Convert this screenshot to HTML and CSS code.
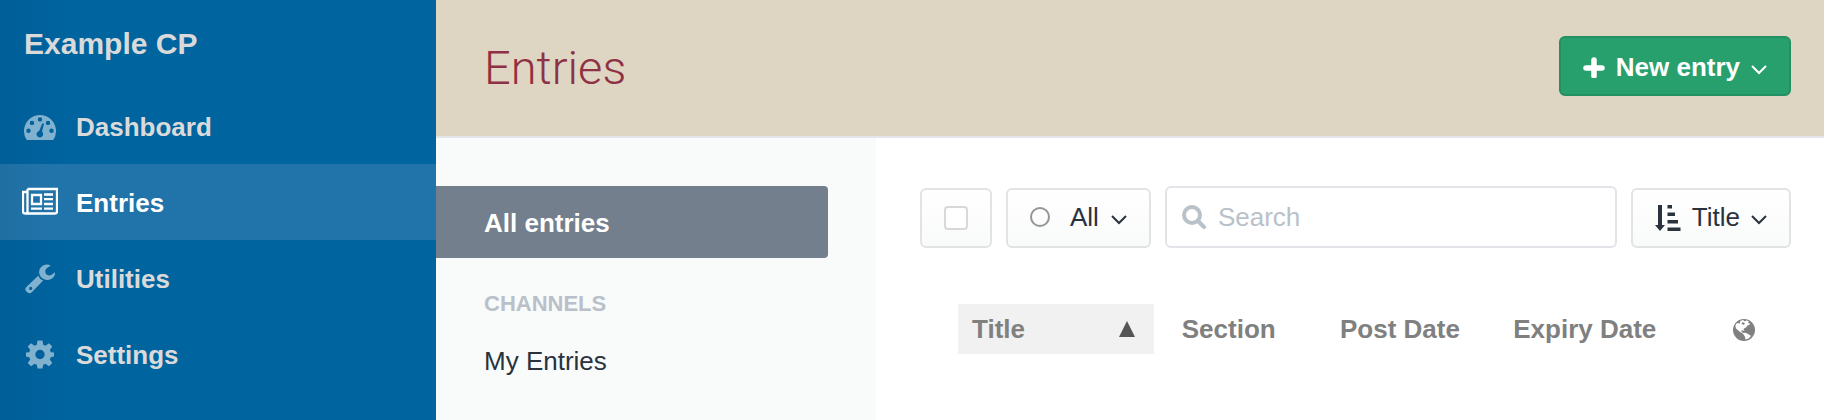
FILE: index.html
```html
<!DOCTYPE html>
<html lang="en">
<head>
<meta charset="utf-8">
<title>Entries - Example CP</title>
<link rel="stylesheet" href="styles.css">
</head>
<body>
<div class="app">
  <aside class="sidebar">
    <a class="site-name" href="#">Example CP</a>
    <nav class="nav" aria-label="Primary">
      <a class="nav-item" href="#">
        <svg class="nav-icon" viewBox="0 0 36 36" aria-hidden="true">
          <path fill="currentColor" fill-rule="evenodd" d="M4.700 32A16 16 0 1 1 31.300 32ZM6.500 20.500a2.200 2.200 0 1 0 0 4.400a2.200 2.200 0 1 0 0-4.400ZM10 12.700a2.200 2.200 0 1 0 0 4.400a2.200 2.200 0 1 0 0-4.400ZM18 9.200a2.200 2.200 0 1 0 0 4.400a2.200 2.200 0 1 0 0-4.400ZM26 12.700a2.200 2.200 0 1 0 0 4.400a2.200 2.200 0 1 0 0-4.400ZM29.500 20.500a2.200 2.200 0 1 0 0 4.400a2.200 2.200 0 1 0 0-4.400ZM20.300 15.600L17.100 22.900A3.300 3.300 0 1 0 20 23.600L21.900 16.200Q21.400 14.900 20.300 15.600Z"/>
        </svg>
        Dashboard
      </a>
      <a class="nav-item is-active" href="#" aria-current="page">
        <svg class="nav-icon" viewBox="0 0 36 36" aria-hidden="true" fill="none" stroke="currentColor" stroke-width="2.300">
          <path d="M5.500 5H35V27.500Q35 29.500 32.500 29.500H3.500Q1 29.500 1 27.500V8H5.500M5.500 5V27.500Q5.500 29.500 3.500 29.500"/>
          <path d="M10 11H19V20H10ZM22 10.500H31M22 15.200H31M22 20H31M9 24.700H20M22 24.700H31"/>
        </svg>
        Entries
      </a>
      <a class="nav-item" href="#">
        <svg class="nav-icon" viewBox="0 0 36 36" aria-hidden="true">
          <path fill="currentColor" d="M28.700 5.500C23.500 2.600 17.300 6.300 17.100 12.100C17.100 15.600 20 19.900 25.300 20C30.400 20 33.500 15.800 33 12.200L29.300 15.100C26 16.600 22.500 13.800 23.400 10.300C24 8.300 25.600 7.700 28.700 5.500Z"/>
          <path fill="currentColor" fill-rule="evenodd" d="M16.200 15.700Q17.500 19 21.200 20.500L9.800 32.200Q7.700 34.300 5.300 32.300L4.200 31.200Q2.300 28.800 4.400 26.900ZM8.700 26.800a1.600 1.600 0 1 0 0 3.200a1.600 1.600 0 1 0 0-3.200Z"/>
        </svg>
        Utilities
      </a>
      <a class="nav-item" href="#">
        <svg class="nav-icon" viewBox="0 0 36 36" aria-hidden="true">
          <path fill="currentColor" fill-rule="evenodd" d="M15.500 4.500H20.500L21.200 8.700L23.500 9.700L27 7.200L30.300 10.500L27.800 14L28.800 16.300L32 16.500V20.500L28.800 21.200L27.800 23.500L30.300 27L27 30.300L23.500 27.800L21.200 28.800L20.500 32.500H15.500L14.800 28.800L12.500 27.800L9 30.300L5.700 27L8.200 23.500L7.200 21.200L4 20.500V16.500L7.200 16.300L8.200 14L5.700 10.500L9 7.200L12.500 9.700L14.800 8.700ZM18 13.800a4.700 4.700 0 1 0 0 9.400a4.700 4.700 0 1 0 0-9.400Z"/>
        </svg>
        Settings
      </a>
    </nav>
  </aside>

  <div class="page">
    <header class="page-header">
      <h1 class="page-title">Entries</h1>
      <button class="btn btn-submit" type="button" aria-haspopup="menu">
        <svg class="plus" viewBox="0 0 22 22" aria-hidden="true"><path d="M11 4V20M3 12H19" stroke="currentColor" stroke-width="5.500" stroke-linecap="round"/></svg>
        New entry
        <svg class="chevron" viewBox="0 0 16 16" aria-hidden="true"><path d="M1 7L8 14L15 7"/></svg>
      </button>
    </header>

    <div class="page-body">
      <nav class="sources" aria-label="Sources">
        <a class="source is-selected" href="#" aria-current="true">All entries</a>
        <h2 class="sources-heading">CHANNELS</h2>
        <a class="source" href="#">My Entries</a>
      </nav>

      <main class="content">
        <div class="toolbar">
          <label class="btn btn-check"><input class="checkbox" type="checkbox" aria-label="Select all"></label>
          <button class="btn btn-status" type="button" aria-haspopup="menu">
            <span class="status-dot"></span>
            All
            <svg class="chevron" viewBox="0 0 16 16" aria-hidden="true"><path d="M1 7L8 14L15 7"/></svg>
          </button>
          <label class="search">
            <svg class="search-icon" viewBox="0 0 24 24" aria-hidden="true" fill="none" stroke="currentColor"><circle cx="10" cy="10" r="8" stroke-width="4"/><path d="M16 16L22 22" stroke-width="4" stroke-linecap="round"/></svg>
            <input class="search-input" type="text" placeholder="Search" aria-label="Search">
          </label>
          <button class="btn btn-sort" type="button" aria-haspopup="menu">
            <svg class="sort-icon" viewBox="0 0 26 28" aria-hidden="true" fill="currentColor"><path d="M3 2H7V22H10L5 28L0 22H3ZM12.500 2H17V5.500H12.500ZM12.500 9.500H20V13H12.500ZM12.500 17H23V20.500H12.500ZM12.500 24.500H25.500V28H12.500Z"/></svg>
            Title
            <svg class="chevron" viewBox="0 0 16 16" aria-hidden="true"><path d="M1 7L8 14L15 7"/></svg>
          </button>
        </div>

        <table class="entries">
          <colgroup>
            <col class="col-title"><col class="col-section"><col class="col-post"><col class="col-expiry"><col class="col-link">
          </colgroup>
          <thead>
            <tr>
              <th class="is-sorted" scope="col" aria-sort="ascending">
                <button class="sort-head" type="button">Title
                  <svg class="sort-arrow" viewBox="0 0 16 16" aria-hidden="true"><path fill="currentColor" d="M8 0L16 16H0Z"/></svg>
                </button>
              </th>
              <th scope="col">Section</th>
              <th scope="col">Post Date</th>
              <th scope="col">Expiry Date</th>
              <th scope="col" aria-label="Webpage">
                <svg class="globe" viewBox="0 0 24 24" aria-hidden="true">
                  <circle cx="12" cy="13" r="11" fill="currentColor"/>
                  <path fill="#fff" d="M8.200 4L11 3L13 4.500L14.500 3.300L17 4.500L16 5.700L18.500 7L15.500 8.500L14 10.500L11.500 11.700L12.500 14L10.500 13.200L9 14L11 16L13.500 15.800L17 17.500L19 19L16.500 21.500L13.500 22.500L12.800 19.500L11 16.800L7.500 14.500L4 11.500L3.300 8.500L5 6L8 6.500Z"/>
                  <path fill="currentColor" d="M10.500 5L13 6.500L11.500 8L9.500 6.500Z"/>
                </svg>
              </th>
            </tr>
          </thead>
        </table>
      </main>
    </div>
  </div>
</div>
</body>
</html>
```
FILE: styles.css
```css
* {
  box-sizing: border-box;
}

body {
  margin: 0;
  font-family: "Liberation Sans", Arial, sans-serif;
  font-size: 26px;
  line-height: 30px;
  color: #29323d;
  background: #fff;
}

a {
  color: inherit;
  text-decoration: none;
}

button,
input {
  font: inherit;
  color: inherit;
}

.app {
  display: flex;
  min-height: 100vh;
}

/* Primary navigation */
.sidebar {
  flex: none;
  width: 436px;
  color: #dadada;
  font-weight: bold;
  background: linear-gradient(to right, #005e98, #00649f 68px);
}

.site-name {
  display: flex;
  align-items: center;
  height: 88px;
  padding: 0 24px;
  font-size: 30px;
}

.nav-item {
  display: flex;
  align-items: center;
  gap: 18px;
  height: 76px;
  padding: 2px 22px 0;
}

.nav-item.is-active {
  color: #fff;
  background: linear-gradient(to right, #206fa3, #2174aa 56px);
}

.nav-icon {
  width: 36px;
  height: 36px;
  margin-bottom: 2px;
  color: #80b1cf;
}

.is-active .nav-icon {
  color: #fff;
}

/* Page header */
.page {
  flex: 1;
  min-width: 0;
  display: flex;
  flex-direction: column;
}

.page-header {
  display: flex;
  align-items: center;
  justify-content: space-between;
  padding: 36px 33px 40px 48px;
  background: #dfd5c3;
  border-bottom: 2px solid #e3e5e8;
}

.page-title {
  margin: 0;
  padding-top: 4px;
  font-family: Roboto, "Liberation Sans", sans-serif;
  font-size: 47px;
  font-weight: 300;
  line-height: 56px;
  color: #8f3144;
}

/* Buttons */
.btn {
  flex: none;
  display: flex;
  align-items: center;
  justify-content: center;
  height: 60px;
  padding: 0 22px;
  border: 2px solid #e3e3e3;
  border-radius: 6px;
  background: linear-gradient(#fff, #f9fafa);
}

.btn-submit {
  gap: 11px;
  padding-top: 2px;
  color: #fff;
  font-weight: bold;
  background: #27a06e;
  border-color: #239063;
}

.plus {
  width: 22px;
  height: 22px;
}

.chevron {
  width: 16px;
  height: 16px;
  fill: none;
  stroke: currentColor;
  stroke-width: 2;
}

/* Sources */
.page-body {
  flex: 1;
  display: flex;
}

.sources {
  flex: none;
  width: 440px;
  padding: 48px 48px 24px 0;
  background: #f9fbfb;
}

.source {
  display: block;
  padding: 8px 48px;
}

.source.is-selected {
  padding: 22px 48px 20px;
  color: #fff;
  font-weight: bold;
  background: #737f8c;
  border-radius: 0 4px 4px 0;
}

.sources-heading {
  margin: 32px 0 20px;
  padding: 0 48px;
  font-size: 22px;
  line-height: 28px;
  color: #b9c0c9;
}

/* Entry index */
.content {
  flex: 1;
  min-width: 0;
  padding: 48px 33px 24px 44px;
}

.toolbar {
  display: flex;
  align-items: flex-end;
  gap: 14px;
}

.btn-check {
  width: 72px;
}

.checkbox {
  appearance: none;
  width: 24px;
  height: 24px;
  margin: 0;
  border: 2px solid #d8d8d8;
  border-radius: 4px;
  background: #fff;
}

.btn-status {
  gap: 12px;
  padding-bottom: 3px;
}

.status-dot {
  width: 20px;
  height: 20px;
  margin-right: 8px;
  border: 2px solid #949494;
  border-radius: 50%;
}

.btn-sort {
  gap: 11px;
  padding-bottom: 3px;
}

.sort-icon {
  width: 26px;
  height: 28px;
}

.search {
  flex: 1;
  min-width: 0;
  display: flex;
  align-items: center;
  gap: 12px;
  height: 62px;
  padding: 0 15px 0;
  border: 2px solid #e3e4ea;
  border-radius: 6px;
}

.search-icon {
  flex: none;
  width: 24px;
  height: 24px;
  color: #b9c1c9;
}

.search-input {
  flex: 1;
  min-width: 0;
  padding: 0;
  border: 0;
  outline: 0;
  background: none;
}

.search-input::placeholder {
  color: #b9c1c9;
  opacity: 1;
}

.entries {
  width: calc(100% - 38px);
  margin: 56px 0 0 38px;
  table-layout: fixed;
  border-collapse: collapse;
  color: #808080;
}

.entries th {
  height: 50px;
  padding: 0 0 0 28px;
  text-align: left;
  vertical-align: middle;
  white-space: nowrap;
}

.entries .is-sorted {
  padding: 0;
  background: #f1f1f1;
}

.col-title { width: 23.5%; }
.col-section { width: 19%; }
.col-post { width: 20.8%; }
.col-expiry { width: 26.3%; }
.col-link { width: 10.4%; }

.sort-head {
  display: flex;
  align-items: center;
  justify-content: space-between;
  width: 100%;
  padding: 0 19px 0 14px;
  border: 0;
  background: none;
}

.sort-arrow {
  width: 16px;
  height: 16px;
  color: #555;
}

.globe {
  display: block;
  width: 24px;
  height: 24px;
}
```
